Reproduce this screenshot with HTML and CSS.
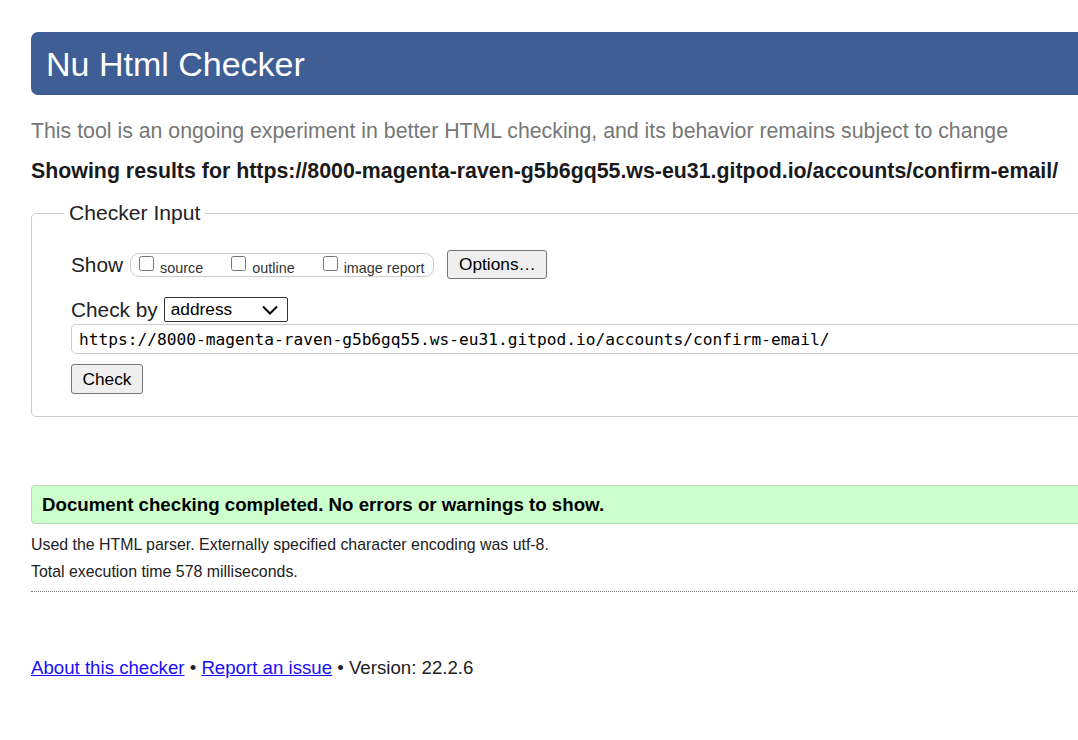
FILE: index.html
```html
<!DOCTYPE html>
<html lang="en">
<head>
<meta charset="utf-8">
<title>Nu Html Checker</title>
<link rel="stylesheet" href="styles.css">
</head>
<body>
<div class="wrap">
  <h1 class="header">Nu Html Checker</h1>
  <p class="intro">This tool is an ongoing experiment in better HTML checking, and its behavior remains subject to change</p>
  <p class="showing">Showing results for https://8000-magenta-raven-g5b6gq55.ws-eu31.gitpod.io/accounts/confirm-email/</p>
  <fieldset class="checker">
    <legend class="legend">Checker Input</legend>
    <div class="row show-row">
      <span class="row-label">Show</span>
      <div class="show-box">
        <label class="opt"><input type="checkbox" class="cb"><span>source</span></label>
        <label class="opt"><input type="checkbox" class="cb"><span>outline</span></label>
        <label class="opt"><input type="checkbox" class="cb"><span>image report</span></label>
      </div>
      <button class="btn btn-options" type="button">Options…</button>
    </div>
    <div class="row by-row">
      <span class="row-label">Check by</span>
      <div class="select">
        <span>address</span>
        <svg class="chev" width="16" height="10" viewBox="0 0 16 10"><path d="M1 1.5 L8 8.5 L15 1.5" fill="none" stroke="#000" stroke-width="2"/></svg>
      </div>
    </div>
    <div class="url">https://8000-magenta-raven-g5b6gq55.ws-eu31.gitpod.io/accounts/confirm-email/</div>
    <button class="btn btn-check" type="button">Check</button>
  </fieldset>
  <p class="success">Document checking completed. No errors or warnings to show.</p>
  <p class="small first">Used the HTML parser. Externally specified character encoding was utf-8.</p>
  <p class="small">Total execution time 578 milliseconds.</p>
  <hr class="dotted">
  <p class="footer"><a href="#">About this checker</a> • <a href="#">Report an issue</a> • Version: 22.2.6</p>
</div>
</body>
</html>
```

FILE: styles.css
```css
html, body {
  overflow: hidden;
}
body {
  margin: 32px 0 0 31px;
  font-family: "Liberation Sans", Arial, sans-serif;
  color: #222;
  background: #fff;
}
.wrap {
  width: 1200px;
}
.header {
  margin: 0;
  height: 63px;
  line-height: 65px;
  padding-left: 15px;
  background: #3e5e95;
  color: #fff;
  font-size: 34px;
  font-weight: normal;
  border-radius: 7px;
}
.intro {
  margin: 24px 0 0;
  font-size: 21.3px;
  line-height: 24px;
  color: #777;
}
.showing {
  margin: 16px 0 0;
  font-size: 21.35px;
  line-height: 24px;
  font-weight: bold;
  color: #1a1a1a;
}
.checker {
  margin: 18px 0 0;
  border: 1px solid #ccc;
  border-radius: 5px;
  padding: 0 0 22px 39px;
  min-width: 0;
}
.legend {
  font-size: 21.1px;
  line-height: 24px;
  padding: 0 5px;
  margin-left: -7px;
  color: #222;
}
.row {
  display: flex;
  align-items: center;
}
.show-row {
  margin-top: 25px;
  height: 29px;
}
.row-label {
  font-size: 20.8px;
  line-height: 24px;
}
.show-box {
  margin-left: 7px;
  height: 24px;
  box-sizing: border-box;
  border: 1px solid #ccc;
  border-radius: 9px;
  padding: 0 9px 0 8px;
  display: flex;
  align-items: center;
  gap: 28px;
}
.opt {
  display: flex;
  align-items: center;
  font-size: 14.4px;
  color: #333;
}
.opt span {
  position: relative;
  top: 3px;
}
.cb {
  width: 15px;
  height: 15px;
  margin: 0 6px 0 0;
  position: relative;
  top: -1px;
}
.btn {
  font-family: "Liberation Sans", Arial, sans-serif;
  font-size: 17.3px;
  background: #efefef;
  border: 1px solid #767676;
  border-radius: 3px;
  color: #000;
  padding: 0;
  box-sizing: border-box;
}
.btn-options {
  margin-left: 13px;
  width: 100px;
  height: 29px;
}
.by-row {
  margin-top: 18px;
}
.select {
  margin-left: 6px;
  width: 124px;
  height: 25px;
  box-sizing: border-box;
  border: 1px solid #333;
  border-radius: 2px;
  display: flex;
  align-items: center;
  justify-content: space-between;
  padding: 0 9px 0 6px;
  font-size: 17.3px;
  color: #000;
}
.chev {
  display: block;
}
.url {
  margin-top: 2px;
  height: 30px;
  box-sizing: border-box;
  border: 1px solid #ccc;
  border-radius: 5px;
  padding-left: 7px;
  font-family: "DejaVu Sans Mono", "Liberation Mono", monospace;
  font-size: 16.2px;
  line-height: 29px;
  color: #000;
}
.btn-check {
  display: block;
  margin-top: 10px;
  width: 72px;
  height: 30px;
}
.success {
  margin: 68px 0 0;
  height: 39px;
  box-sizing: border-box;
  background: #ccffcc;
  border: 1px solid #b7d8b7;
  border-radius: 4px;
  padding-left: 10px;
  font-size: 18.7px;
  font-weight: bold;
  line-height: 38px;
  color: #000;
}
.small {
  margin: 9px 0 0;
  font-size: 15.9px;
  line-height: 18px;
  color: #222;
}
.small.first {
  margin-top: 12px;
}
.dotted {
  margin: 10px 0 0;
  border: 0;
  border-top: 1px dotted #777;
  height: 0;
}
.footer {
  margin: 64px 0 0;
  font-size: 18.66px;
  line-height: 24px;
  color: #222;
}
.footer a {
  color: #1a0dff;
}
```
